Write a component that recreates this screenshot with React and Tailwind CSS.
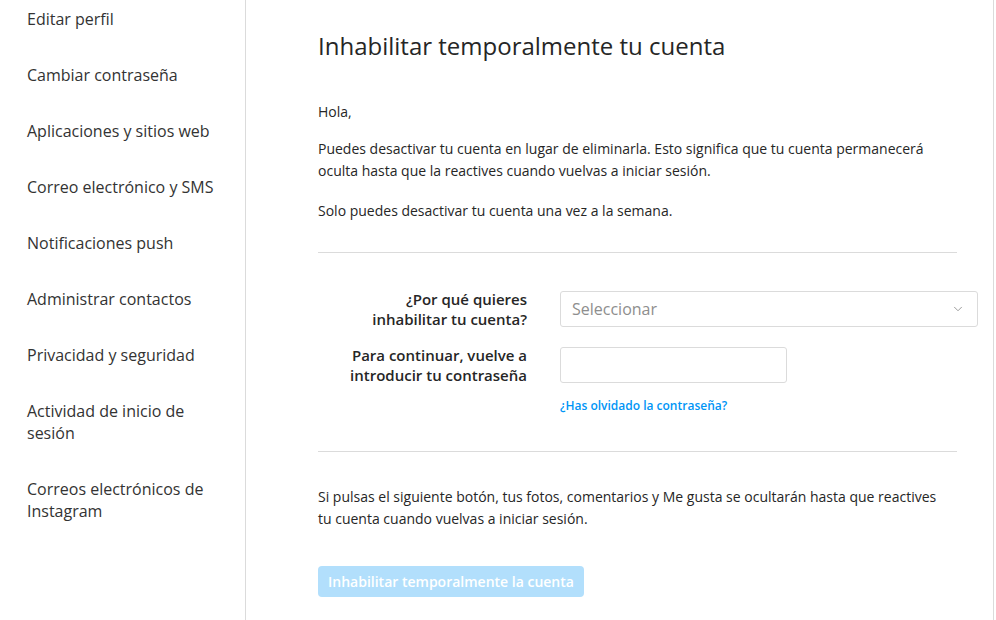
import React from 'react';
import { ChevronDown } from 'lucide-react';

const menu = [
  ['Editar perfil'],
  ['Cambiar contraseña'],
  ['Aplicaciones y sitios web'],
  ['Correo electrónico y SMS'],
  ['Notificaciones push'],
  ['Administrar contactos'],
  ['Privacidad y seguridad'],
  ['Actividad de inicio de', 'sesión'],
  ['Correos electrónicos de', 'Instagram'],
];

const Sidebar = () => (
  <nav className="w-[246px] shrink-0 border-r border-[#dbdbdb] pt-[8px] pl-[27px] pr-[20px] flex flex-col gap-[34px]">
    {menu.map((lines) => (
      <div key={lines[0]} className="text-[16px] leading-[22px] text-[#333333]">
        {lines.map((l) => (
          <div key={l}>{l}</div>
        ))}
      </div>
    ))}
  </nav>
);

const Main = () => (
  <main className="w-[748px] border-r border-[#dbdbdb] pl-[72px] pr-[35px] pt-[29px]">
    <h1 className="text-[24px] leading-[34px] text-[#262626]">Inhabilitar temporalmente tu cuenta</h1>

    <div className="mt-[38px] text-[14px] leading-[22px] text-[#262626]">
      <p>Hola,</p>
      <p className="mt-[15px] max-w-[628px]">
        Puedes desactivar tu cuenta en lugar de eliminarla. Esto significa que tu cuenta permanecerá
        oculta hasta que la reactives cuando vuelvas a iniciar sesión.
      </p>
      <p className="mt-[18px]">Solo puedes desactivar tu cuenta una vez a la semana.</p>
    </div>

    <div className="mt-[30px] h-px bg-[#dbdbdb] mr-[1px]" />

    <div className="mt-[36px] flex flex-col gap-[16px]">
      <div className="flex items-center gap-[33px]">
        <label className="w-[209px] text-right text-[15px] leading-[20px] font-semibold text-[#262626]">
          ¿Por qué quieres
          <br />
          inhabilitar tu cuenta?
        </label>
        <div className="w-[418px] h-[36px] border border-[#dbdbdb] rounded-[3px] flex items-center justify-between pl-[11px] pr-[12px] -mr-[20px]">
          <span className="text-[16px] text-[#8e8e8e]">Seleccionar</span>
          <ChevronDown size={14} strokeWidth={1.5} className="text-[#8e8e8e]" />
        </div>
      </div>
      <div className="flex items-center gap-[33px]">
        <label className="w-[209px] text-right text-[15px] leading-[20px] font-semibold text-[#262626]">
          Para continuar, vuelve a
          <br />
          introducir tu contraseña
        </label>
        <div className="w-[227px] h-[36px] border border-[#dbdbdb] rounded-[3px]" />
      </div>
    </div>
    <a className="block ml-[242px] mt-[12px] text-[12px] font-semibold text-[#0095f6]">
      ¿Has olvidado la contraseña?
    </a>

    <div className="mt-[36px] h-px bg-[#dbdbdb] mr-[1px]" />

    <p className="mt-[34px] max-w-[628px] text-[14px] leading-[22px] text-[#262626]">
      Si pulsas el siguiente botón, tus fotos, comentarios y Me gusta se ocultarán hasta que reactives
      tu cuenta cuando vuelvas a iniciar sesión.
    </p>

    <button className="mt-[36px] h-[31px] px-[10px] rounded-[4px] bg-[#b2dffc] text-white text-[14px] font-semibold">
      Inhabilitar temporalmente la cuenta
    </button>
  </main>
);

export default function App() {
  return (
    <div className="w-[996px] h-[620px] overflow-hidden bg-white flex font-['Open_Sans',sans-serif]">
      <Sidebar />
      <Main />
    </div>
  );
}
